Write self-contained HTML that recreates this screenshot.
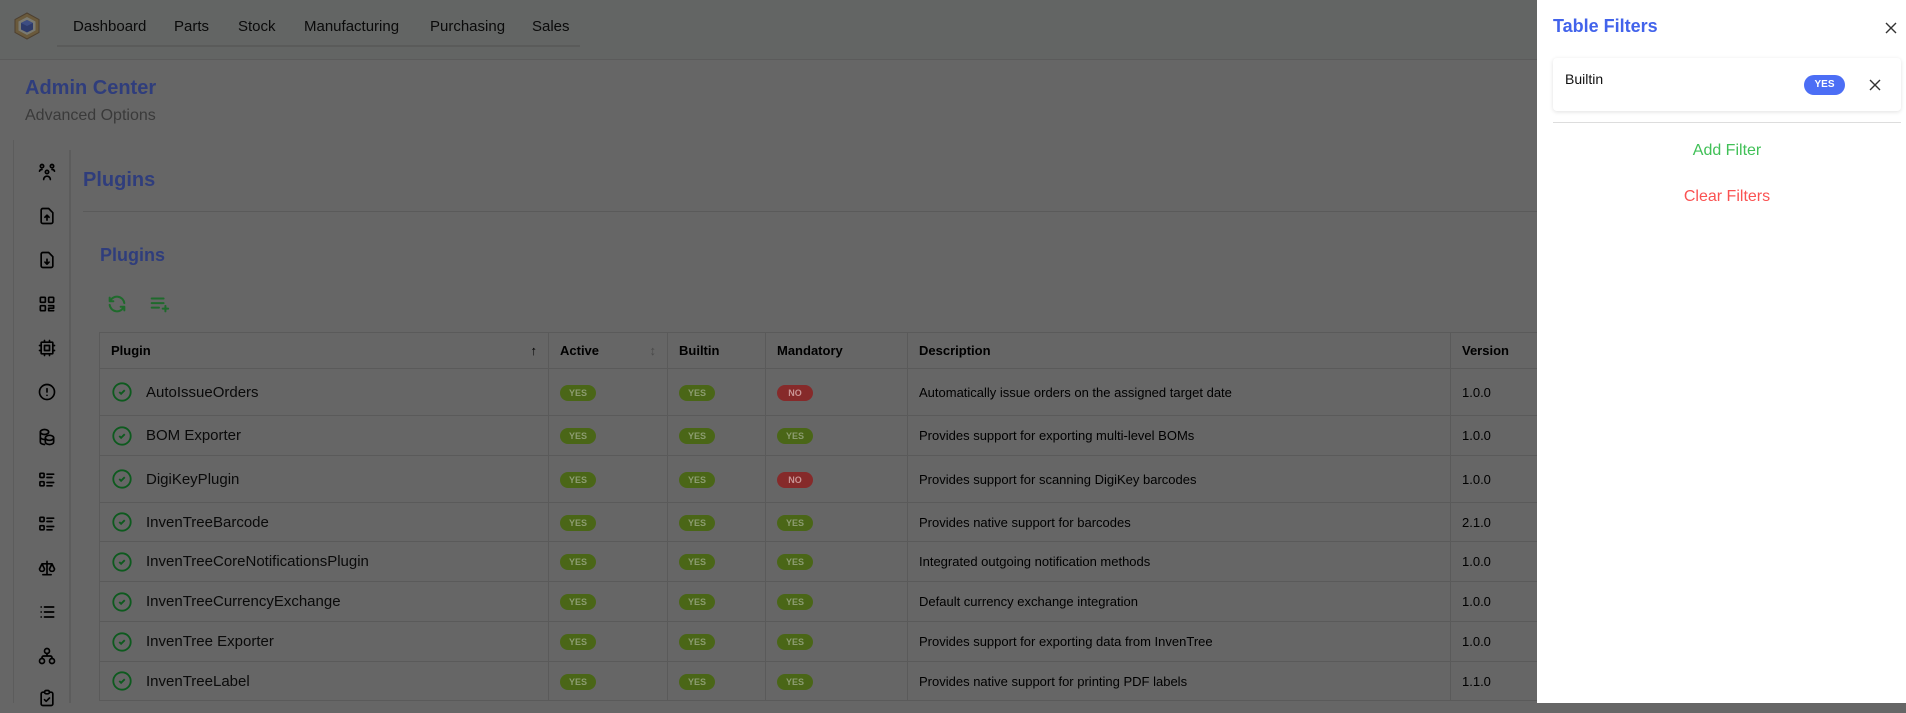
<!DOCTYPE html>
<html><head><meta charset="utf-8">
<style>
*{box-sizing:border-box;margin:0;padding:0}
body{width:1906px;height:703px;overflow:hidden;background:#666;font-family:"Liberation Sans",sans-serif;color:#000;position:relative}
.abs{position:absolute}
.hdr{left:0;top:0;width:1906px;height:60px;background:#636564;border-bottom:1px solid #5b5b5b}
.nav{font-size:15px;top:18px;color:#0a0a0a}
.ico{position:absolute;left:37px;width:20px;height:20px}
.ico svg{width:20px;height:20px;fill:none;stroke:#000;stroke-width:2;stroke-linecap:round;stroke-linejoin:round}
table{position:absolute;left:99px;top:332px;border-collapse:collapse;width:1500px;font-size:13px}
td,th{border:1px solid #5a5a5a;padding:0 11px;text-align:left;white-space:nowrap;vertical-align:middle}
th{height:36px;font-weight:bold;font-size:13px}
.b{display:inline-block;width:36px;height:16px;border-radius:8px;background:#4a6617;color:#8c9c70;font-size:9px;font-weight:bold;text-align:center;line-height:16px}
.n{background:#862a2a;color:#c89494}
.nm{font-size:15px;color:#0a0a0a}
.nm div{display:flex;align-items:center}
.nm svg{margin-right:13px;width:22px;height:22px;flex:none}
.drawer{left:1537px;top:0;width:369px;height:703px;background:#fff}
.bl{color:#2f3d7c}
</style></head><body>
<div class="abs hdr"></div>
<svg class="abs" style="left:13px;top:12px" width="28" height="28" viewBox="0 0 28 28"><polygon points="14,1 26,7.5 26,20.5 14,27 2,20.5 2,7.5" fill="#6a5a3c" stroke="#4e4030" stroke-width="1"/><polygon points="14,5 22.5,9.5 22.5,18.5 14,23 5.5,18.5 5.5,9.5" fill="#7a7a72"/><polygon points="14,8 20,11 20,17.5 14,20.5 8,17.5 8,11" fill="#2d3a6a"/><polygon points="14,8 20,11 14,14 8,11" fill="#3d4d82"/></svg>
<div class="abs nav" style="left:73px">Dashboard</div>
<div class="abs nav" style="left:174px">Parts</div>
<div class="abs nav" style="left:238px">Stock</div>
<div class="abs nav" style="left:304px">Manufacturing</div>
<div class="abs nav" style="left:430px">Purchasing</div>
<div class="abs nav" style="left:532px">Sales</div>
<div class="abs" style="left:57px;top:45px;width:523px;height:2px;background:#5a5b5a"></div>

<div class="abs bl" style="left:25px;top:77px;font-size:20px;font-weight:bold">Admin Center</div>
<div class="abs" style="left:25px;top:107px;font-size:16px;color:#3a3a3a">Advanced Options</div>

<div class="abs" style="left:13px;top:140px;width:1px;height:563px;background:#5c5c5c"></div>
<div class="abs" style="left:69px;top:150px;width:2px;height:553px;background:#5c5c5c"></div>

<div class="ico" style="top:162px"><svg viewBox="0 0 24 24"><circle cx="6" cy="5" r="2"/><circle cx="18" cy="5" r="2"/><circle cx="12" cy="12" r="2"/><path d="M3 11a3 3 0 0 1 3-2M21 11a3 3 0 0 0-3-2M8 21a4 4 0 0 1 8 0"/></svg></div>
<div class="ico" style="top:206px"><svg viewBox="0 0 24 24"><path d="M14 3H7a2 2 0 0 0-2 2v14a2 2 0 0 0 2 2h10a2 2 0 0 0 2-2V8z"/><path d="M12 17v-6M9.5 13.5 12 11l2.5 2.5"/></svg></div>
<div class="ico" style="top:250px"><svg viewBox="0 0 24 24"><path d="M14 3H7a2 2 0 0 0-2 2v14a2 2 0 0 0 2 2h10a2 2 0 0 0 2-2V8z"/><path d="M12 11v6M9.5 14.5 12 17l2.5-2.5"/></svg></div>
<div class="ico" style="top:294px"><svg viewBox="0 0 24 24"><rect x="4" y="4" width="6" height="6" rx="1"/><rect x="14" y="4" width="6" height="6" rx="1"/><rect x="4" y="14" width="6" height="6" rx="1"/><path d="M14 14h6v3h-6v3h6"/></svg></div>
<div class="ico" style="top:338px"><svg viewBox="0 0 24 24"><rect x="5" y="5" width="14" height="14" rx="1"/><rect x="9" y="9" width="6" height="6"/><path d="M3 9h2M3 15h2M19 9h2M19 15h2M9 3v2M15 3v2M9 19v2M15 19v2"/></svg></div>
<div class="ico" style="top:382px"><svg viewBox="0 0 24 24"><circle cx="12" cy="12" r="9"/><path d="M12 8v4M12 16v.01"/></svg></div>
<div class="ico" style="top:427px"><svg viewBox="0 0 24 24"><ellipse cx="9" cy="6" rx="5" ry="3"/><path d="M4 6v6c0 1.5 2 3 5 3M4 12v6c0 1.5 2 3 5 3"/><ellipse cx="15" cy="13" rx="5" ry="3"/><path d="M10 13v5c0 1.5 2 3 5 3s5-1.5 5-3v-5"/></svg></div>
<div class="ico" style="top:470px"><svg viewBox="0 0 24 24"><rect x="3.5" y="4" width="5" height="5" rx="1"/><rect x="3.5" y="14" width="5" height="5" rx="1"/><path d="M12 5h8M12 9h6M12 15h8M12 19h6"/></svg></div>
<div class="ico" style="top:514px"><svg viewBox="0 0 24 24"><rect x="3.5" y="4" width="5" height="5" rx="1"/><rect x="3.5" y="14" width="5" height="5" rx="1"/><path d="M12 5h8M12 9h6M12 15h8M12 19h6"/></svg></div>
<div class="ico" style="top:558px"><svg viewBox="0 0 24 24"><path d="M7 20h10M12 4v16M6 7h12M6 7l-3 6a3 3 0 0 0 6 0zM18 7l-3 6a3 3 0 0 0 6 0z"/></svg></div>
<div class="ico" style="top:602px"><svg viewBox="0 0 24 24"><path d="M9 6h11M9 12h11M9 18h11M5 6v.01M5 12v.01M5 18v.01"/></svg></div>
<div class="ico" style="top:646px"><svg viewBox="0 0 24 24"><rect x="9" y="3" width="6" height="6" rx="3"/><circle cx="6" cy="18" r="3"/><circle cx="18" cy="18" r="3"/><path d="M12 9v3M6 15v-1a2 2 0 0 1 2-2h8a2 2 0 0 1 2 2v1"/></svg></div>
<div class="ico" style="top:688px"><svg viewBox="0 0 24 24"><path d="M9 5H7a2 2 0 0 0-2 2v12a2 2 0 0 0 2 2h10a2 2 0 0 0 2-2V7a2 2 0 0 0-2-2h-2"/><rect x="9" y="3" width="6" height="4" rx="2"/><path d="m9 14 2 2 4-4"/></svg></div>

<div class="abs bl" style="left:83px;top:169px;font-size:20px;font-weight:bold">Plugins</div>
<div class="abs" style="left:83px;top:211px;width:1454px;height:1px;background:#5a5a5a"></div>
<div class="abs bl" style="left:100px;top:245px;font-size:18px;font-weight:bold">Plugins</div>
<svg class="abs" style="left:106px;top:293px" width="22" height="22" viewBox="0 0 24 24" fill="none" stroke="#1f6a2c" stroke-width="2.2" stroke-linecap="round" stroke-linejoin="round"><path d="M20 11A8.1 8.1 0 0 0 4.5 9M4 5v4h4M4 13a8.1 8.1 0 0 0 15.5 2M20 19v-4h-4"/></svg>
<svg class="abs" style="left:148px;top:293px" width="22" height="22" viewBox="0 0 24 24" fill="none" stroke="#1f6a2c" stroke-width="2.2" stroke-linecap="round"><path d="M4 6h13M4 11h13M4 16h8M16 17h6M19 14v6"/></svg>

<table>
<tr><th style="width:449px">Plugin<span style="float:right;font-weight:normal">↑</span></th><th style="width:119px">Active<span style="float:right;color:#4a4a4a;font-weight:normal">↕</span></th><th style="width:98px">Builtin</th><th style="width:142px">Mandatory</th><th style="width:543px">Description</th><th>Version</th></tr>
<tr style="height:47px"><td class="nm"><div><svg viewBox="0 0 24 24" fill="none" stroke="#0d5a1e" stroke-width="2"><circle cx="12" cy="12" r="9.5"/><path d="m9 12 2 2 4-4"/></svg>AutoIssueOrders</div></td><td><span class="b">YES</span></td><td><span class="b">YES</span></td><td><span class="b n">NO</span></td><td>Automatically issue orders on the assigned target date</td><td>1.0.0</td></tr>
<tr style="height:40px"><td class="nm"><div><svg viewBox="0 0 24 24" fill="none" stroke="#0d5a1e" stroke-width="2"><circle cx="12" cy="12" r="9.5"/><path d="m9 12 2 2 4-4"/></svg>BOM Exporter</div></td><td><span class="b">YES</span></td><td><span class="b">YES</span></td><td><span class="b">YES</span></td><td>Provides support for exporting multi-level BOMs</td><td>1.0.0</td></tr>
<tr style="height:47px"><td class="nm"><div><svg viewBox="0 0 24 24" fill="none" stroke="#0d5a1e" stroke-width="2"><circle cx="12" cy="12" r="9.5"/><path d="m9 12 2 2 4-4"/></svg>DigiKeyPlugin</div></td><td><span class="b">YES</span></td><td><span class="b">YES</span></td><td><span class="b n">NO</span></td><td>Provides support for scanning DigiKey barcodes</td><td>1.0.0</td></tr>
<tr style="height:39px"><td class="nm"><div><svg viewBox="0 0 24 24" fill="none" stroke="#0d5a1e" stroke-width="2"><circle cx="12" cy="12" r="9.5"/><path d="m9 12 2 2 4-4"/></svg>InvenTreeBarcode</div></td><td><span class="b">YES</span></td><td><span class="b">YES</span></td><td><span class="b">YES</span></td><td>Provides native support for barcodes</td><td>2.1.0</td></tr>
<tr style="height:40px"><td class="nm"><div><svg viewBox="0 0 24 24" fill="none" stroke="#0d5a1e" stroke-width="2"><circle cx="12" cy="12" r="9.5"/><path d="m9 12 2 2 4-4"/></svg>InvenTreeCoreNotificationsPlugin</div></td><td><span class="b">YES</span></td><td><span class="b">YES</span></td><td><span class="b">YES</span></td><td>Integrated outgoing notification methods</td><td>1.0.0</td></tr>
<tr style="height:40px"><td class="nm"><div><svg viewBox="0 0 24 24" fill="none" stroke="#0d5a1e" stroke-width="2"><circle cx="12" cy="12" r="9.5"/><path d="m9 12 2 2 4-4"/></svg>InvenTreeCurrencyExchange</div></td><td><span class="b">YES</span></td><td><span class="b">YES</span></td><td><span class="b">YES</span></td><td>Default currency exchange integration</td><td>1.0.0</td></tr>
<tr style="height:40px"><td class="nm"><div><svg viewBox="0 0 24 24" fill="none" stroke="#0d5a1e" stroke-width="2"><circle cx="12" cy="12" r="9.5"/><path d="m9 12 2 2 4-4"/></svg>InvenTree Exporter</div></td><td><span class="b">YES</span></td><td><span class="b">YES</span></td><td><span class="b">YES</span></td><td>Provides support for exporting data from InvenTree</td><td>1.0.0</td></tr>
<tr style="height:39px"><td class="nm"><div><svg viewBox="0 0 24 24" fill="none" stroke="#0d5a1e" stroke-width="2"><circle cx="12" cy="12" r="9.5"/><path d="m9 12 2 2 4-4"/></svg>InvenTreeLabel</div></td><td><span class="b">YES</span></td><td><span class="b">YES</span></td><td><span class="b">YES</span></td><td>Provides native support for printing PDF labels</td><td>1.1.0</td></tr>
</table>

<div class="abs drawer">
  <div class="abs" style="left:16px;top:16px;font-size:18px;font-weight:bold;color:#4263eb">Table Filters</div>
  <svg class="abs" style="left:346px;top:20px" width="16" height="16" viewBox="0 0 16 16" stroke="#333" stroke-width="1.4"><path d="M3 3l10 10M13 3 3 13"/></svg>
  <div class="abs" style="left:16px;top:58px;width:348px;height:53px;border-radius:4px;box-shadow:0 1px 4px rgba(0,0,0,.12)">
    <div class="abs" style="left:12px;top:13px;font-size:14px;color:#111">Builtin</div>
    <div class="abs" style="left:251px;top:17px;width:41px;height:20px;border-radius:10px;background:#4c6ef5;color:#fff;font-size:10px;font-weight:bold;text-align:center;line-height:20px">YES</div>
    <svg class="abs" style="left:315px;top:20px" width="14" height="14" viewBox="0 0 14 14" stroke="#333" stroke-width="1.4"><path d="M2 2l10 10M12 2 2 12"/></svg>
  </div>
  <div class="abs" style="left:16px;top:122px;width:348px;height:1px;background:#ddd"></div>
  <div class="abs" style="left:16px;top:142px;width:348px;text-align:center;font-size:16px;color:#40c057">Add Filter</div>
  <div class="abs" style="left:16px;top:188px;width:348px;text-align:center;font-size:16px;color:#fa5252">Clear Filters</div>
</div>
</body></html>
